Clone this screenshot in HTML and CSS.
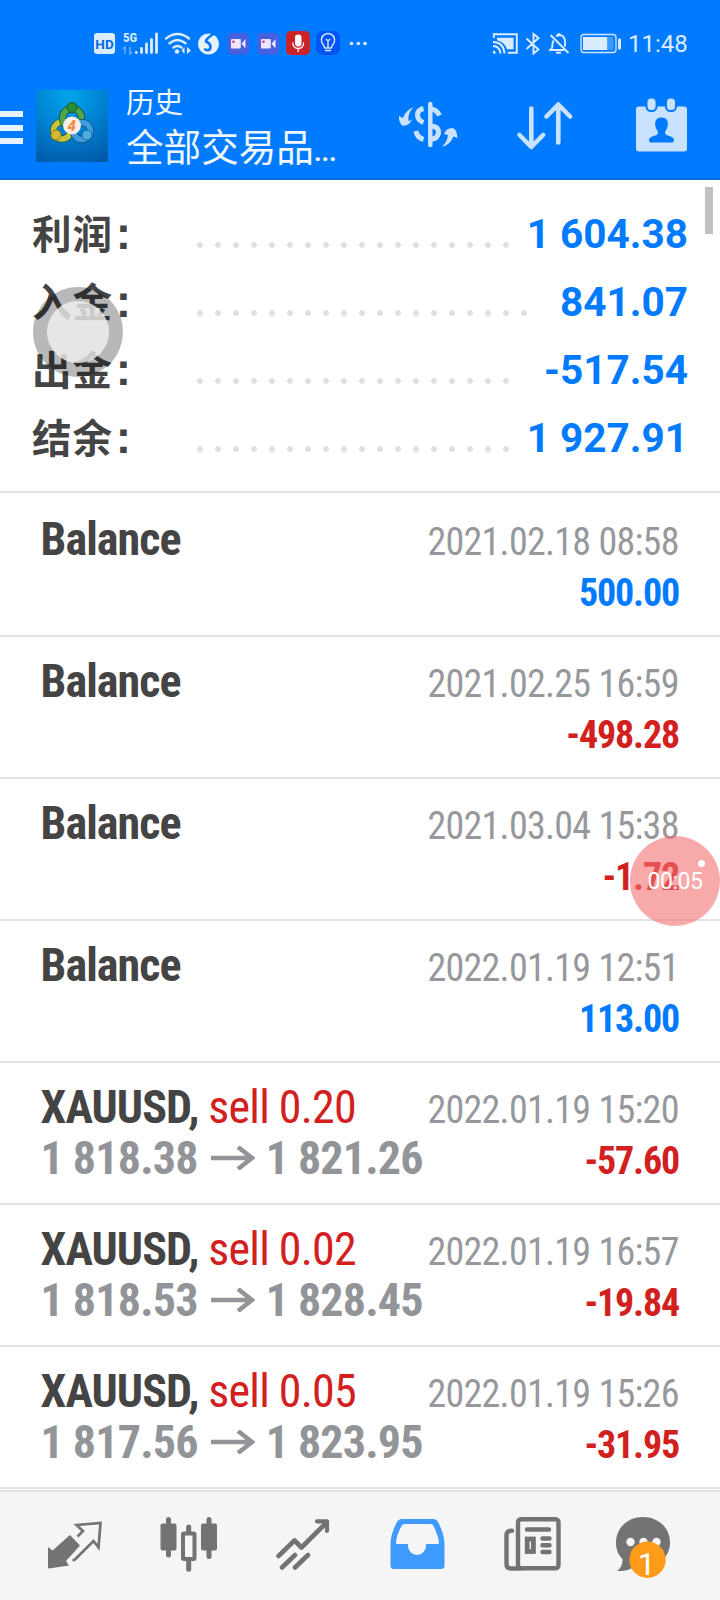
FILE: index.html
```html
<!DOCTYPE html>
<html lang="zh-CN">
<head>
<meta charset="utf-8">
<title>历史</title>
<link rel="stylesheet" href="styles.css">
</head>
<body>
<div class="screen">
  <header class="header">
    <div class="status">
      <svg class="status-left" width="300" height="50" viewBox="0 0 300 50">
        <rect x="14" y="13" width="21" height="21" rx="3" fill="#dcecff"/>
        <text x="24.5" y="28.7" class="hd">HD</text>
        <text x="43" y="22" class="five-g">5G</text>
        <path d="M45 34v-7l-2 2M50 27v7l2-2" stroke="#66aeff" stroke-width="1.5" fill="none"/>
        <path d="M56.300 32.500v-.1M61.500 32.500v-4M66.500 32.500v-8.500M71.500 32.500v-13M76.500 32.500v-18.500" stroke="#dcecff" stroke-width="2.800" stroke-linecap="round"/>
        <g fill="none" stroke="#dcecff" stroke-width="2.400" stroke-linecap="round"><path d="M86 18.500q11.500-9 23 0M89.500 23.300q8-6.500 16 0M93.500 27.500q4-3 8 0"/></g>
        <circle cx="97" cy="31.500" r="2.200" fill="#dcecff"/><path d="M104.500 27v7l-3-3.500zM107 27v7l4-3.500z" fill="#dcecff"/>
        <circle cx="128.500" cy="24" r="10.500" fill="#e6f2ff"/>
        <path d="M133.500 14q-7.500 4.500-7.500 7.500 4.500 2 4.500 5.500 0 3-3 3.300-2.500 0-2.300-2" fill="none" stroke="#0075f5" stroke-width="2.600"/>
        <g id="cam"><rect x="147.500" y="13" width="21.500" height="21.500" rx="4.500" fill="#4660df"/><rect x="151" y="19" width="9.800" height="9.500" rx="1" fill="#f0e5ff"/><path d="M161.500 23.700l4-4.700v9.500z" fill="#f0e5ff"/><circle cx="153.500" cy="21.800" r="1.300" fill="#d33768"/></g>
        <use href="#cam" x="30"/>
        <rect x="206" y="11" width="24" height="24" rx="5" fill="#ce2229"/>
        <rect x="215" y="14.500" width="6.500" height="12" rx="3.200" fill="#fff"/><path d="M212.800 22.500q0 6 5.400 6t5.400-6M218.200 28.500v3.500" stroke="#fff" stroke-width="1.300" fill="none"/>
        <rect x="236" y="11" width="24" height="24" rx="7" fill="#0054f4"/>
        <path d="M244.700 28q-.5-2.500-2-4a6.600 6.600 0 1 1 10.600 0q-1.500 1.500-2 4zM245 30.500h6M248 28v-7l-2-2M248 21l2-2" stroke="#cfe4ff" stroke-width="1.500" fill="none"/>
        <g fill="#dcecff"><circle cx="271.500" cy="23.500" r="1.800"/><circle cx="278.300" cy="23.500" r="1.800"/><circle cx="285" cy="23.500" r="1.800"/></g>
      </svg>
      <svg class="status-right" width="145" height="50" viewBox="0 0 145 50">
        <g fill="none" stroke="#dcecff" stroke-width="1.900"><path d="M13.800 18v-3.700h23v18.500h-9M13 22q10.500 0 11.500 11.500M13 26q6.500 0 7.500 7.500"/><path d="M46.500 18.500l12 11-5 4v-19.500l5 4-12 11M70.500 15l18 18M73.500 20.500q-1.300 2.500-1.300 7l-2 2.500h14M76 16q8-3 9 5v5.500M76 32.800h5"/></g>
        <path d="M13 30.500q2.500 0 3 3h-3zM17 17.800h16.500v11.500h-6.500q-2.500-7.500-10-9z" fill="#dcecff"/>
        <path d="M77 15.500q0-2.500 2-2.500t2 2.500z" fill="#dcecff"/>
        <rect x="101" y="14.500" width="35" height="18" rx="3" fill="none" stroke="#cfe5ff" stroke-width="1.300"/><rect x="103" y="17" width="24.500" height="13" fill="#dcecff"/><rect x="127.500" y="17" width="6" height="13" fill="#3d98ff"/><rect x="138" y="18.500" width="3" height="11" rx="1" fill="#dcecff"/>
      </svg>
      <span class="clock">11:48</span>
    </div>
    <div class="bar">
      <div class="menu"><i></i><i></i><i></i></div>
      <svg class="logo" width="72" height="72" viewBox="0 0 72 72">
        <defs>
          <radialGradient id="lg" cx=".45" cy=".05" r="1.050"><stop offset="0" stop-color="#00a5ea"/><stop offset=".5" stop-color="#0080d0"/><stop offset="1" stop-color="#0057a8"/></radialGradient>
        </defs>
        <rect width="72" height="72" fill="url(#lg)"/>
        <path d="M0 12h72M0 24h72M0 36h72M0 48h72M0 60h72M12 0v72M24 0v72M36 0v72M48 0v72M60 0v72" stroke="#35a9e4" stroke-opacity=".15" stroke-width=".7"/>
        <g fill="none" stroke-width="5.500"><circle cx="26" cy="40.500" r="8.500" stroke="#2c5a30" stroke-width="7"/><circle cx="26" cy="40.500" r="8.500" stroke="#c9c33c"/><circle cx="36" cy="28" r="9.500" stroke="#17501f" stroke-width="7"/><circle cx="36" cy="28" r="9.500" stroke="#51a64b"/><circle cx="46" cy="41" r="8.500" stroke="#075082" stroke-width="7"/><circle cx="46" cy="41" r="8.500" stroke="#3f9ddb"/></g>
        <g stroke-width="1"><circle cx="36" cy="17.500" r="5" fill="#278e34" stroke="#176023"/><circle cx="20" cy="45" r="5" fill="#d6b92f" stroke="#93821e"/><circle cx="51" cy="45" r="5" fill="#4aacdf" stroke="#1d6ea8"/></g>
        <circle cx="36" cy="35.500" r="9" fill="#f6efe8"/><text x="35.700" y="41" class="four">4</text>
      </svg>
      <div class="titles"><div class="t1">历史</div><div class="t2">全部交易品<span>...</span></div></div>
      <svg class="actions" width="340" height="100" viewBox="0 0 340 100">
        <g fill="none" stroke="#c9e2ff"><path d="M50.300 24v41" stroke-width="4.500" stroke-linecap="round"/><path d="M43.500 28.500q-6 1.500-6 6.500t6 7.500M36 51q1 6.500 7.500 8.500" stroke-width="5"/><path d="M50 29q6.500 0 9.500 6.500M50 46q9 0 8.500 7-1 6-8.500 6.500" stroke-width="5"/></g>
        <path d="M33.500 27.500q-6 5-5 13.500l3.500-1q-3.500 6.500-10 5.500-3.500-4-3-9.500l4 2q2.500-8 10.500-10.500zM62 66.500q5-4 6-11.500l-4-1q2-6 8.500-6 4.500 1 5 10l-4-1.500q-4 9-11.500 10z" fill="#c9e2ff"/>
        <path d="M151.300 28.500v38M139.500 55l11.800 12 11.800-12M178.300 62.500v-38M166.500 36.500l11.800-12 11.800 12" fill="none" stroke="#c9e2ff" stroke-width="4.600" stroke-linecap="round" stroke-linejoin="round"/>
        <rect x="256" y="26.500" width="51" height="45" rx="3" fill="#c9e2ff"/>
        <g fill="#c9e2ff" stroke="#007aff" stroke-width="2"><rect x="266.500" y="17.500" width="10" height="13.500" rx="4.500"/><rect x="286" y="17.500" width="10" height="13.500" rx="4.500"/></g>
        <path d="M281.500 37.500c5 0 6.800 3.500 6.300 8-.4 3.500-2.800 5-2.800 7.500 0 3.500 9 2 9 7.500q0 2-2 2h-21q-2 0-2-2c0-5.500 9-4 9-7.500 0-2.500-2.400-4-2.800-7.500-.5-4.500 1.300-8 6.300-8z" fill="#007aff"/>
      </svg>
    </div>
  </header>

  <main class="content">
    <section class="summary">
      <div class="sum"><b>利润<span>:</span></b><i class="dots d18"></i><strong>1 604.38</strong></div>
      <div class="sum"><b>入金<span>:</span></b><i class="dots d19"></i><strong>841.07</strong></div>
      <div class="sum"><b>出金<span>:</span></b><i class="dots d18"></i><strong>-517.54</strong></div>
      <div class="sum"><b>结余<span>:</span></b><i class="dots d18"></i><strong>1 927.91</strong></div>
      <div class="scrollbar"></div>
      <div class="assist"></div>
    </section>
    <section class="deals">
      <article class="deal"><div class="line"><b>Balance</b><time>2021.02.18 08:58</time></div><div class="line only"><strong class="plus">500.00</strong></div></article>
      <article class="deal"><div class="line"><b>Balance</b><time>2021.02.25 16:59</time></div><div class="line only"><strong>-498.28</strong></div></article>
      <article class="deal"><div class="line"><b>Balance</b><time>2021.03.04 15:38</time></div><div class="line only"><strong>-1.72</strong></div><div class="recorder"><i></i>00:05</div></article>
      <article class="deal"><div class="line"><b>Balance</b><time>2022.01.19 12:51</time></div><div class="line only"><strong class="plus">113.00</strong></div></article>
      <article class="deal"><div class="line"><b>XAUUSD, <em>sell 0.20</em></b><time>2022.01.19 15:20</time></div><div class="line"><span class="price">1 818.38<svg class="arrow" viewBox="0 0 44 24"><path d="M0 12h41M27 1l14 11-14 11"/></svg>1 821.26</span><strong>-57.60</strong></div></article>
      <article class="deal"><div class="line"><b>XAUUSD, <em>sell 0.02</em></b><time>2022.01.19 16:57</time></div><div class="line"><span class="price">1 818.53<svg class="arrow" viewBox="0 0 44 24"><path d="M0 12h41M27 1l14 11-14 11"/></svg>1 828.45</span><strong>-19.84</strong></div></article>
      <article class="deal"><div class="line"><b>XAUUSD, <em>sell 0.05</em></b><time>2022.01.19 15:26</time></div><div class="line"><span class="price">1 817.56<svg class="arrow" viewBox="0 0 44 24"><path d="M0 12h41M27 1l14 11-14 11"/></svg>1 823.95</span><strong>-31.95</strong></div></article>
    </section>
  </main>

  <nav class="tabs">
    <svg width="720" height="108" viewBox="0 0 720 108">
      <g fill="#737373">
        <path d="M70 43l10 10.500-14 15.500 3 4.500-20 3q-1 0-1-1V55l4.500 3.500z"/>
        <path d="M72.500 68h2l19-19 5 6.500 2-24.500-24 2 6.500 6-5.500 5.500" fill="none" stroke="#737373" stroke-width="2.700"/>
        <rect x="160.500" y="31.500" width="16" height="27" rx="2"/><rect x="201" y="31.500" width="16" height="27" rx="2"/>
        <path d="M168.500 27.500v35.500M209 27.500v37M188.700 35v7M188.700 68v9.200" stroke="#737373" stroke-width="5" stroke-linecap="round"/>
        <rect x="183" y="41.500" width="11.500" height="25.500" rx="1" fill="#f5f5f5" stroke="#737373" stroke-width="4"/>
      </g>
      <g fill="none" stroke="#737373" stroke-width="4.600" stroke-linecap="round" stroke-linejoin="round"><path d="M278.500 64l16-15.500 7 7 25-25M282 75.500l13-12.500M295 75.500l13-12.500"/><path d="M317 29.300h10v9.700" stroke-width="4.200"/></g>
      <path fill-rule="evenodd" fill="#409bff" d="M402 27h31q3.500 0 5 3 6.500 12 6.500 22v21.500q0 3.500-3.500 3.500h-47q-3.500 0-3.500-3.500V52q0-10 6.500-22 1.500-3 5-3zM404.500 32q-2 0-3 2-5 9-5.500 17 0 1 1.500 1h10.500v2a9 9 0 0 0 18 0v-2h11.500q1.500 0 1.500-1-.5-7-5.500-17-1-2-3-2z"/>
      <g fill="none" stroke="#737373" stroke-width="4.400" stroke-linecap="round"><rect x="518" y="27.200" width="40.500" height="49" rx="3"/><path d="M512 38.800h-1q-4.500 0-4.500 4.500v28.700q0 4.500 4.500 4.500h9"/><path d="M527 37.500h22M542.500 46.500h7M542.500 53.300h7M542.500 60h7"/><rect x="527.200" y="47" width="6.200" height="12.500" stroke-width="4.800"/></g>
      <path fill="#737373" d="M643 25c15 0 27 10.500 27 25.500S658 75 643 75c-3 0-6-.5-8-1-4 3.500-10 5.500-18 5q6-4.500 5.500-12c-4-4-6.500-9-6.500-16C616 35.500 628 25 643 25z"/>
      <g fill="#f5f5f5"><circle cx="630.500" cy="50" r="4.200"/><circle cx="643.500" cy="50" r="4.200"/><circle cx="656.500" cy="50" r="4.200"/></g>
      <circle cx="647.500" cy="67.700" r="18.200" fill="#ff9b18"/>
      <text x="646.500" y="82.700" class="badge">1</text>
    </svg>
  </nav>
</div>
</body>
</html>
```
FILE: styles.css
```css
* { box-sizing: border-box; }
body { margin: 0; background: #fff; font-family: Roboto, "Noto Sans CJK SC", sans-serif; }
b, i, em { font-style: normal; }
svg { display: block; flex: none; }
.screen { width: 720px; height: 1600px; display: flex; flex-direction: column; overflow: hidden; }

.header { height: 180px; flex: none; background: #007aff; border-bottom: 2px solid #006bdf; }
.status { height: 70px; padding: 20px 0 0 80px; display: flex; }
.status-right { margin-left: 100px; }
.clock { color: #dcecff; font-size: 24px; line-height: 28px; padding-top: 10px; margin-left: 3px; }
.hd { font: bold 13.5px Roboto; text-anchor: middle; fill: #006be0; }
.five-g { font: bold 13px Roboto; font-stretch: 75%; fill: #dcecff; }
.bar { display: flex; height: 108px; }
.menu { width: 23px; padding-top: 41px; display: flex; flex-direction: column; gap: 7.5px; flex: none; }
.menu i { height: 6px; background: #e6f2ff; }
.logo { margin: 20px 0 0 13px; }
.four { font: italic bold 15px Roboto; text-anchor: middle; fill: #f08a3c; }
.titles { width: 236px; margin-left: 18px; color: #f0f7ff; font-family: "Noto Sans CJK SC", sans-serif; white-space: nowrap; flex: none; }
.t1 { font-size: 28.5px; line-height: 40px; padding-top: 11px; }
.t2 { font-size: 37.6px; line-height: 50px; margin-top: -1px; }
.t2 span { font-family: Roboto, sans-serif; font-size: 26px; font-weight: 700; }
.actions { margin: 10px 0 0 18px; }

.summary { position: relative; height: 313px; padding: 20px 32px 0; border-bottom: 2px solid #e3e3e3; }
.sum { height: 68px; display: flex; align-items: flex-start; }
.sum b { width: 162px; color: #444; font: bold 39.5px/68px "Noto Sans CJK SC", sans-serif; letter-spacing: .9px; margin-top: -2px; }
.sum b span { font: bold 46px/60px "Liberation Sans", sans-serif; margin-left: 3px; }
.sum strong { margin-left: auto; color: #007aff; font-size: 40.5px; line-height: 68px; }
.dots { height: 6px; margin-top: 42px; background: radial-gradient(circle at 6px 3px, #e0e0e0 2.6px, transparent 3.2px) 0 0 / 18px 6px repeat-x; }
.d18 { width: 324px; }
.d19 { width: 342px; }
.scrollbar { position: absolute; right: 7px; top: 7px; width: 8px; height: 47px; background: #c1c1c1; }
.assist { position: absolute; left: 33px; top: 107px; width: 90px; height: 90px; border-radius: 50%; border: 14px solid rgba(0,0,0,.28); background: rgba(226,226,226,.86); background-clip: padding-box; }

.deals { font-family: "Roboto Condensed", Roboto, sans-serif; font-stretch: 75%; }
.deal { position: relative; height: 142px; padding: 17px 42px 0 40.6px; border-bottom: 2px solid #e3e3e3; }
.deal:first-child { height: 144px; padding-top: 19px; }
.line { height: 51px; display: flex; justify-content: space-between; align-items: baseline; line-height: 54px; font-size: 38px; white-space: nowrap; }
.only { justify-content: flex-end; padding-top: 3px; }
.line b { font-size: 46px; color: #444; letter-spacing: -.95px; }
.line em { color: #d2201f; font-weight: 400; letter-spacing: -.75px; }
.line time { color: #96989c; letter-spacing: -.72px; margin-right: -.7px; }
.line strong { color: #d2201f; letter-spacing: -1.15px; margin-right: -1.1px; }
.line .plus { color: #007aff; }
.price { font-size: 46px; font-weight: 700; color: #929498; letter-spacing: -.8px; }
.arrow { display: inline-block; width: 44px; height: 24px; margin: 0 11px 0 13px; vertical-align: 4px; fill: none; stroke: #929498; stroke-width: 4.5px; }
.recorder { position: absolute; right: 0; top: 57px; width: 90px; height: 90px; z-index: 2; border-radius: 50%; background: rgba(244,112,112,.6); color: #fff; font: 23px/91px Roboto, sans-serif; letter-spacing: -.5px; text-align: center; }
.recorder i { position: absolute; right: 15px; top: 24px; width: 7px; height: 7px; border-radius: 50%; background: #fff; }

.tabs { margin-top: 1px; height: 110px; flex: none; background: #f5f5f5; border-top: 2px solid #e0e0e0; }
.badge { font: 32px Roboto; text-anchor: middle; fill: #fff; }
```
